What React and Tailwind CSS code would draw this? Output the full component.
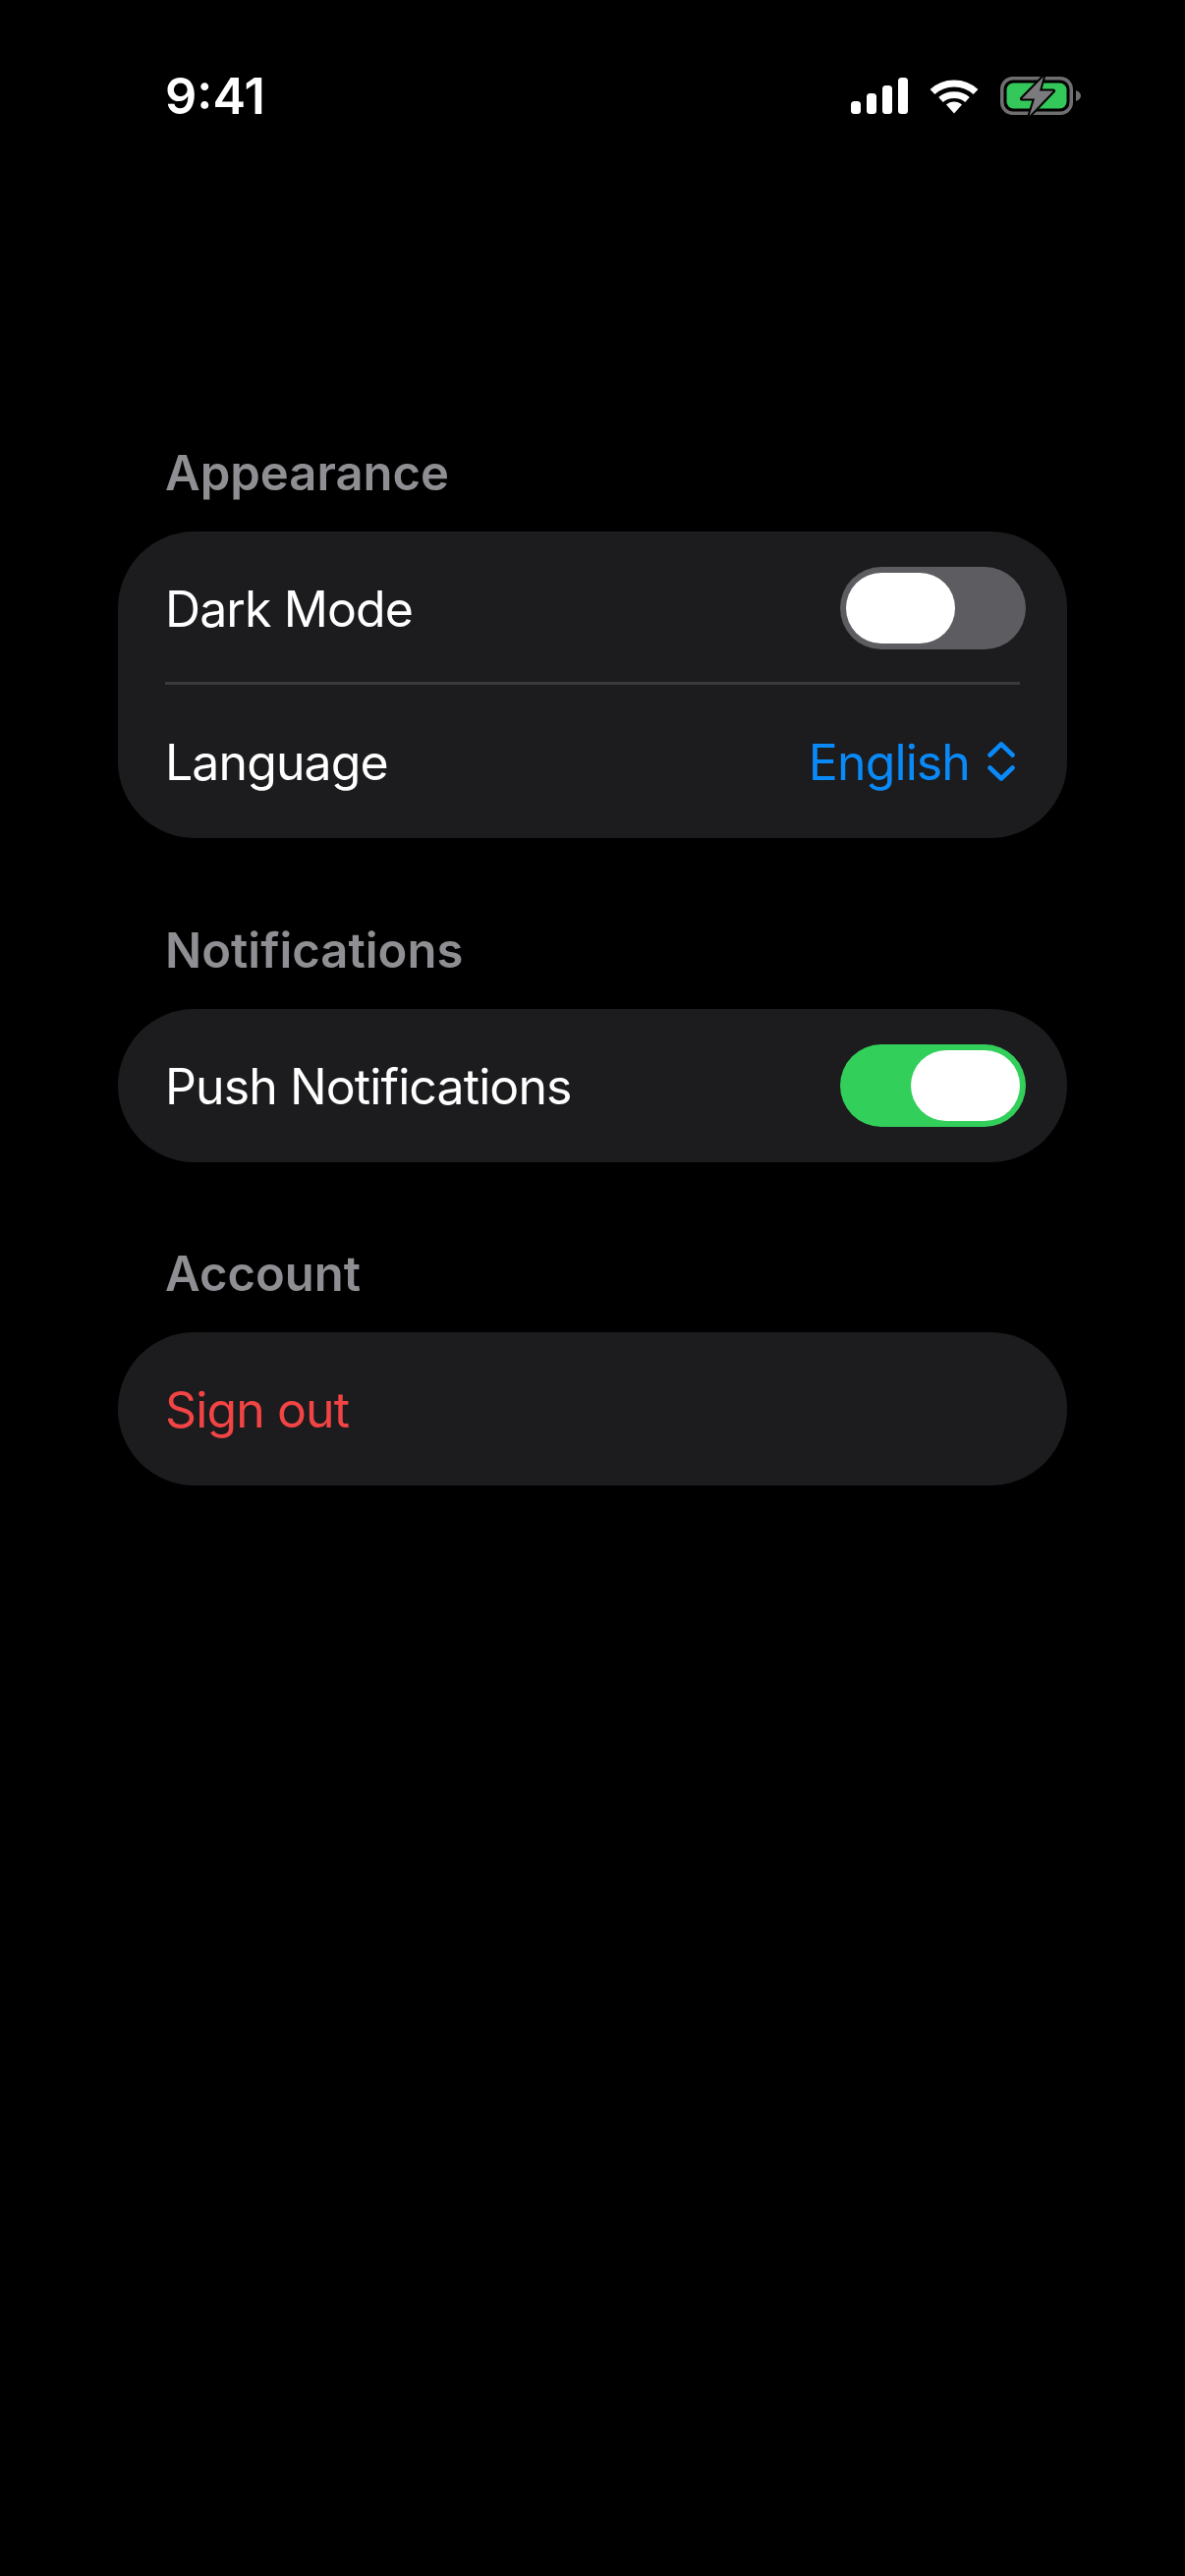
import React from "react";

const FONT = "font-['Inter','Liberation_Sans',sans-serif]";

function Toggle({ on }) {
  return (
    <div className={`flex h-[84px] w-[189px] rounded-full p-[6px] ${on ? "justify-end bg-[#33cf5b]" : "justify-start bg-[#5d5d61]"}`}>
      <div className="h-[72px] w-[111px] rounded-full bg-white" />
    </div>
  );
}

function Section({ title, children, className = "" }) {
  return (
    <section className={`flex flex-col ${className}`}>
      <h2 className="mb-[30px] pl-[48px] text-[49px] leading-[58px] font-semibold tracking-normal text-[#8e8e93]">{title}</h2>
      <div className="rounded-[78px] bg-[#1c1c1e] pl-[48px]">{children}</div>
    </section>
  );
}

function Row({ children, pr = "pr-[42px]" }) {
  return <div className={`flex h-[156px] items-center justify-between ${pr}`}>{children}</div>;
}

function Label({ children, className = "" }) {
  return <span className={`pt-[3px] ${className}`}>{children}</span>;
}

function Signal() {
  return (
    <svg width="58" height="37" viewBox="0 0 58 37" fill="#fff">
      <rect x="0" y="24" width="10" height="13" rx="3.5" />
      <rect x="16" y="16" width="10" height="21" rx="3.5" />
      <rect x="32" y="8" width="10" height="29" rx="3.5" />
      <rect x="48" y="0" width="10" height="37" rx="3.5" />
    </svg>
  );
}

function Wifi() {
  return (
    <svg width="50" height="36" viewBox="0 0 50 36" fill="none">
      <path d="M3 13.5C15 2 35 2 47 13.5" stroke="#fff" strokeWidth="7" strokeLinecap="butt" />
      <path d="M11.5 21.5C18.5 15 31.5 15 38.5 21.5" stroke="#fff" strokeWidth="6.8" strokeLinecap="butt" />
      <path d="M17 26.6C21.5 22.4 28.5 22.4 33 26.6L25 35.5Z" fill="#fff" />
    </svg>
  );
}

function Battery() {
  return (
    <svg width="84" height="42" viewBox="0 0 84 42" fill="none">
      <rect x="1.75" y="2.75" width="70.5" height="35.5" rx="11" stroke="#6f6f71" strokeWidth="3.5" />
      <rect x="6.5" y="7.5" width="61" height="26" rx="7" fill="#34c759" />
      <path d="M77 15C80 16 82 18 82 20.5C82 23 80 25 77 26Z" fill="#6f6f71" />
      <path d="M44 1L22 23.5H35L29.5 41L54 15.5H40Z" fill="#7b7b7d" stroke="#000" strokeWidth="4" strokeLinejoin="round" paintOrder="stroke" />
    </svg>
  );
}

function Chevrons() {
  return (
    <svg width="30" height="42" viewBox="0 0 30 42" fill="none" stroke="#0a8af8" strokeWidth="4.6" strokeLinecap="round" strokeLinejoin="round">
      <path d="M3.5 14.5L15 3.5L26.5 14.5" />
      <path d="M3.5 27.5L15 38.5L26.5 27.5" />
    </svg>
  );
}

export default function App() {
  return (
    <div className={`${FONT} h-[2622px] w-[1206px] overflow-hidden bg-black text-[50px] tracking-[-0.9px] text-white`}>
      <header className="flex h-[195px] items-center justify-between pr-[104px] pl-[168px]">
        <span className="text-[50.5px] font-semibold tracking-normal">9:41</span>
        <div className="flex items-center gap-[22px]">
          <Signal />
          <Wifi />
          <Battery />
        </div>
      </header>
      <main className="flex flex-col gap-[86px] px-[120px] pt-[258px]">
        <Section title="Appearance">
          <Row>
            <Label>Dark Mode</Label>
            <Toggle on={false} />
          </Row>
          <div className="mr-[48px] -mt-[3px] h-[3px] bg-[#3a3a3c]" />
          <Row pr="pr-[52px]">
            <Label>Language</Label>
            <span className="flex items-center gap-[17px] text-[#0a8af8]">
              <Label>English</Label>
              <Chevrons />
            </span>
          </Row>
        </Section>
        <Section title="Notifications">
          <Row>
            <Label>Push Notifications</Label>
            <Toggle on />
          </Row>
        </Section>
        <Section title="Account" className="-mt-[1px]">
          <Row>
            <Label className="text-[#f24444]">Sign out</Label>
          </Row>
        </Section>
      </main>
    </div>
  );
}
